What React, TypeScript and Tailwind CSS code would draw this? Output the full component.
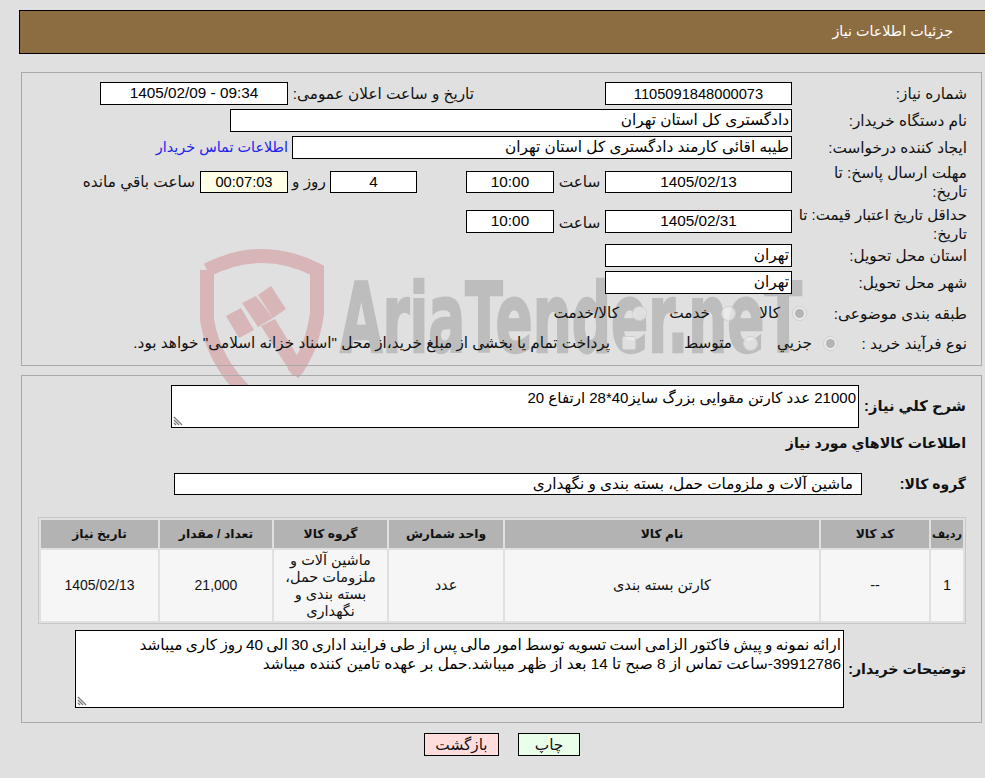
import type { ReactNode } from 'react';

const rows = [
  { id: '1', code: '--', name: 'کارتن بسته بندی', unit: 'عدد', group: 'ماشین آلات و ملزومات حمل، بسته بندی و نگهداری', qty: '21,000', date: '1405/02/13' },
];

function Box({ className, bg = 'bg-white', children }: { className: string; bg?: string; children?: ReactNode }) {
  return <div className={`shrink-0 border border-black text-black flex ${bg} ${className}`}>{children}</div>;
}

function Label({ className = 'w-[175px]', children }: { className?: string; children: ReactNode }) {
  return <div className={`shrink-0 leading-[19px] ${className}`}>{children}</div>;
}

function Radio({ checked = false }: { checked?: boolean }) {
  return (
    <span className="flex h-[15px] w-[15px] shrink-0 items-center justify-center rounded-full border border-[#cfcfcf] bg-[#eeeeee]/70">
      {checked && <span className="h-[9px] w-[9px] rounded-full bg-[#b4b4b4]" />}
    </span>
  );
}

function Grip() {
  return (
    <svg className="absolute bottom-[1px] left-[1px]" width="10" height="10" viewBox="0 0 10 10">
      <path d="M1 1L9 9M1 4L6 9M1 7L3 9" stroke="#777777" strokeWidth="1.2" fill="none" />
    </svg>
  );
}

function Watermark() {
  return (
    <svg className="absolute left-0 top-0 -z-10" width="985" height="778" viewBox="0 0 985 778">
      <g fill="none" stroke="#d8b5b6" strokeWidth="14">
        <path d="M207 270Q262 242 317 270L317 313Q312 350 293 374" />
        <path d="M207 270L207 320Q214 362 246 392" />
      </g>
      <g fill="#d8b5b6">
        <polygon points="226,316 241,308 254,330 239,338" />
        <polygon points="242,303 256,296 273,318 258,327" />
        <polygon points="258,295 271,286 286,309 273,318" />
        <polygon points="261,326 275,319 301,362 293,376" />
      </g>
      <text x="340" y="352" direction="ltr" textAnchor="start" textLength="462" lengthAdjust="spacingAndGlyphs" fontSize="96" fontWeight="700" fontFamily="DejaVu Sans" fill="#bdbdbd" stroke="#bdbdbd" strokeWidth="2.5">
        AriaTender.neT
      </text>
    </svg>
  );
}

export default function App() {
  return (
    <div dir="rtl" className="relative isolate min-h-screen overflow-hidden bg-[#e0e0e0] pl-[19px] pt-[10px] font-['Liberation_Sans','DejaVu_Sans',sans-serif] text-[15.3px] text-[#111111]">
      <Watermark />

      <div className="flex h-[44px] items-center border border-r-0 border-black bg-[#8c6d42] pr-[32px] text-[14.3px] text-white">
        جزئیات اطلاعات نیاز
      </div>

      <div className="ml-[2px] mr-[3px] mt-[18px] flex h-[294px] flex-col border border-[#a9a9a9] pr-[14px] pt-[9px]">
        <div className="flex h-[23px] items-center">
          <Label>شماره نیاز:</Label>
          <Box className="h-[23px] w-[187px] items-center justify-center text-[14.67px]">1105091848000073</Box>
          <Label className="mr-[131px] w-[186px]">تاریخ و ساعت اعلان عمومی:</Label>
          <Box className="h-[23px] w-[188px] items-center justify-center">
            <span dir="ltr">1405/02/09 - 09:34</span>
          </Box>
        </div>

        <div className="mt-[4px] flex h-[23px] items-center">
          <Label>نام دستگاه خریدار:</Label>
          <Box className="h-[23px] w-[562px] items-center pr-[2px]">دادگستری کل استان تهران</Box>
        </div>

        <div className="mt-[4px] flex h-[23px] items-center">
          <Label>ایجاد کننده درخواست:</Label>
          <Box className="h-[23px] w-[500px] items-center pr-[2px]">طیبه اقائی کارمند دادگستری کل استان تهران</Box>
          <a className="mr-[4px] text-[14.4px] text-[#2222ee]">اطلاعات تماس خریدار</a>
        </div>

        <div className="mt-[3px] flex h-[40px] items-center">
          <Label>
            مهلت ارسال پاسخ: تا
            <br />
            تاریخ:
          </Label>
          <Box className="h-[22px] w-[187px] items-center justify-center">1405/02/13</Box>
          <div className="w-[51px] shrink-0 text-center">ساعت</div>
          <Box className="h-[22px] w-[88px] items-center justify-center">10:00</Box>
          <Box className="mr-[49px] h-[22px] w-[87px] items-center justify-center">4</Box>
          <div className="w-[42px] shrink-0 text-center">روز و</div>
          <Box bg="bg-[#ffffe8]" className="h-[22px] w-[88px] items-center justify-center text-[14.67px]">00:07:03</Box>
          <div className="mr-[5px] shrink-0">ساعت باقي مانده</div>
        </div>

        <div className="mt-[1px] flex h-[40px] items-start">
          <Label className="mt-[2px] w-[175px] text-[15px]">
            حداقل تاریخ اعتبار قیمت: تا
            <br />
            تاریخ:
          </Label>
          <Box className="mt-[7px] h-[23px] w-[187px] items-center justify-center">1405/02/31</Box>
          <div className="mt-[9px] w-[51px] shrink-0 text-center">ساعت</div>
          <Box className="mt-[7px] h-[23px] w-[88px] items-center justify-center">10:00</Box>
        </div>

        <div className="mt-[1px] flex h-[23px] items-center">
          <Label>استان محل تحویل:</Label>
          <Box className="h-[23px] w-[187px] items-center pr-[2px]">تهران</Box>
        </div>

        <div className="mt-[4px] flex h-[23px] items-center">
          <Label>شهر محل تحویل:</Label>
          <Box className="h-[23px] w-[187px] items-center pr-[2px]">تهران</Box>
        </div>

        <div className="mt-[4px] flex h-[30px] items-center">
          <Label className="w-[160px]">طبقه بندی موضوعی:</Label>
          <Radio checked />
          <span className="mr-[12px] w-[44px] shrink-0">کالا</span>
          <Radio />
          <span className="mr-[11px] w-[63px] shrink-0">خدمت</span>
          <Radio />
          <span className="mr-[13px] shrink-0">کالا/خدمت</span>
        </div>

        <div className="flex h-[30px] items-center">
          <Label className="w-[129px]">نوع فرآیند خرید :</Label>
          <Radio checked />
          <span className="mr-[11px] w-[54px] shrink-0">جزيي</span>
          <Radio />
          <span className="mr-[11px] w-[96px] shrink-0">متوسط</span>
          <span className="h-[14px] w-[14px] shrink-0 rounded-[2px] border border-[#cfcfcf] bg-[#eeeeee]/70" />
          <span className="mr-[12px] shrink-0">پرداخت تمام یا بخشی از مبلغ خرید،از محل "اسناد خزانه اسلامی" خواهد بود.</span>
        </div>
      </div>

      <div className="ml-[2px] mr-[3px] mt-[9px] flex h-[348px] flex-col border border-[#a9a9a9] pr-[15px] pt-[9px]">
        <div className="flex h-[43px] items-center">
          <Label className="w-[107px] text-[14.67px] font-bold">شرح كلي نياز:</Label>
          <Box className="relative h-[43px] w-[688px] items-start pr-[2px] pt-[2px] text-[15px] leading-[19px]">
            21000 عدد کارتن مقوایی بزرگ سایز40*28 ارتفاع 20
            <Grip />
          </Box>
        </div>

        <div className="mt-[5px] h-[20px] text-[14.2px] font-bold leading-[20px]">اطلاعات كالاهاي مورد نياز</div>

        <div className="mt-[20px] flex h-[22px] items-center">
          <Label className="w-[104px] text-[14px] font-bold">گروه کالا:</Label>
          <Box className="h-[22px] w-[688px] items-center pr-[8px]">ماشین آلات و ملزومات حمل، بسته بندی و نگهداری</Box>
        </div>

        <table className="mt-[22px] w-[928px] table-fixed border-separate border-spacing-[2px] border border-[#c8c8c8] text-center">
          <colgroup>
            <col className="w-[32px]" />
            <col className="w-[108px]" />
            <col className="w-[314px]" />
            <col className="w-[114px]" />
            <col className="w-[113px]" />
            <col className="w-[112px]" />
            <col className="w-[117px]" />
          </colgroup>
          <thead>
            <tr className="h-[28px] bg-[#b3b3b3] text-[12.3px] font-bold">
              <th className="text-[11.3px]">ردیف</th>
              <th>کد کالا</th>
              <th>نام کالا</th>
              <th>واحد شمارش</th>
              <th>گروه کالا</th>
              <th>تعداد / مقدار</th>
              <th>تاریخ نیاز</th>
            </tr>
          </thead>
          <tbody>
            {rows.map((row) => (
              <tr key={row.id} className="h-[71px] bg-[#f6f6f6] text-[14.5px] leading-[17px]">
                <td>{row.id}</td>
                <td>{row.code}</td>
                <td>{row.name}</td>
                <td>{row.unit}</td>
                <td className="px-[8px]">{row.group}</td>
                <td className="text-[14px]">{row.qty}</td>
                <td className="text-[14px]">{row.date}</td>
              </tr>
            ))}
          </tbody>
        </table>

        <div className="mt-[6px] flex h-[78px] items-center">
          <Label className="w-[122px] text-[14.2px] font-bold">توضیحات خریدار:</Label>
          <Box className="relative h-[78px] w-[769px] items-start px-[2px] pt-[4px] leading-[19px]">
            <div>
              <span className="[word-spacing:-0.9px]">ارائه نمونه و پیش فاکتور الزامی است تسویه توسط امور مالی پس از طی فرایند اداری 30 الی 40 روز کاری میباشد</span>
              <br />
              39912786-ساعت تماس از 8 صبح تا 14 بعد از ظهر میباشد.حمل بر عهده تامین کننده میباشد
            </div>
            <Grip />
          </Box>
        </div>
      </div>

      <div className="mt-[10px] flex justify-center gap-[19px]">
        <button className="h-[23px] w-[62px] border border-black bg-[#eaffea]">چاپ</button>
        <button className="h-[23px] w-[75px] border border-black bg-[#ffdddd]">بازگشت</button>
      </div>
    </div>
  );
}
